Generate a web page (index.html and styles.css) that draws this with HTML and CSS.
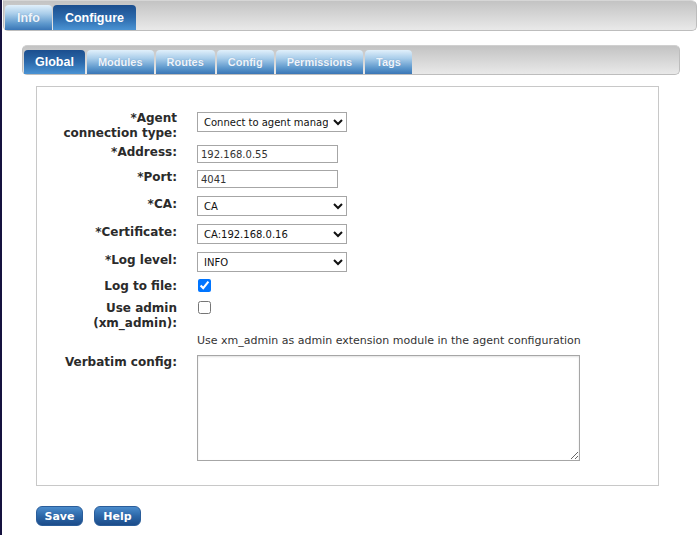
FILE: index.html
```html
<!DOCTYPE html>
<html>
<head>
<meta charset="utf-8">
<link rel="stylesheet" href="styles.css">
</head>
<body>
<div class="page">
  <div class="topbar">
    <div class="tab tab-top">Info</div>
    <div class="tab tab-top tab-sel">Configure</div>
  </div>
  <div class="subbar">
    <div class="tab tab-sub tab-sel">Global</div>
    <div class="tab tab-sub">Modules</div>
    <div class="tab tab-sub">Routes</div>
    <div class="tab tab-sub">Config</div>
    <div class="tab tab-sub">Permissions</div>
    <div class="tab tab-sub">Tags</div>
  </div>
  <div class="panel">
    <div class="form">
      <label class="lbl lbl-first">*Agent<br>connection type:</label>
      <div class="ctl"><select class="sel sel-first"><option>Connect to agent manager</option></select></div>

      <label class="lbl">*Address:</label>
      <div class="ctl"><input class="txt" type="text" value="192.168.0.55"></div>

      <label class="lbl">*Port:</label>
      <div class="ctl"><input class="txt" type="text" value="4041"></div>

      <label class="lbl lbl-sel">*CA:</label>
      <div class="ctl"><select class="sel"><option>CA</option></select></div>

      <label class="lbl lbl-sel">*Certificate:</label>
      <div class="ctl"><select class="sel"><option>CA:192.168.0.16</option></select></div>

      <label class="lbl lbl-sel">*Log level:</label>
      <div class="ctl"><select class="sel"><option>INFO</option></select></div>

      <label class="lbl">Log to file:</label>
      <div class="ctl"><input class="chk" type="checkbox" checked></div>

      <label class="lbl lbl-admin">Use admin<br>(xm_admin):</label>
      <div class="ctl"><input class="chk" type="checkbox"></div>

      <div class="lbl"></div>
      <div class="ctl help">Use xm_admin as admin extension module in the agent configuration</div>

      <label class="lbl">Verbatim config:</label>
      <div class="ctl"><textarea class="area"></textarea></div>
    </div>
  </div>
  <div class="buttons">
    <button class="btn">Save</button>
    <button class="btn">Help</button>
  </div>
</div>
</body>
</html>
```
FILE: styles.css
```css
html, body {
  margin: 0;
  padding: 0;
  background: #ffffff;
}
body {
  font-family: "DejaVu Sans", Verdana, sans-serif;
  color: #222;
}
.page {
  border-left: 2px solid #15123f;
  min-height: 535px;
  box-sizing: border-box;
  padding: 0 3px 0 1px;
}
.topbar {
  height: 31px;
  border: 1px solid #bdbdbd;
  border-top-color: #d6d6d6;
  border-radius: 0 6px 5px 5px;
  background: linear-gradient(#c3c3c3, #e9e9e9);
  display: flex;
  align-items: flex-end;
  padding-left: 1px;
  gap: 1px;
  box-sizing: border-box;
}
.tab {
  font-family: "Liberation Sans", Arial, sans-serif;
  font-weight: bold;
  color: #eef4fb;
  border-radius: 4px 4px 0 0;
  background: linear-gradient(#e1f0fb 0%, #a9cdea 35%, #5c97cc 75%, #3a76b6 100%);
  text-align: center;
  box-sizing: border-box;
  text-shadow: 0 0 1px rgba(60,100,150,0.4);
}
.tab-sel {
  color: #ffffff;
  background: linear-gradient(#1b4e8e 0%, #2b69ab 50%, #4a93d3 100%);
  text-shadow: none;
}
.tab-top {
  font-size: 12.5px;
  height: 25px;
  line-height: 26px;
  padding: 0 12px;
}
.subbar {
  margin: 14px 17px 0 19px;
  height: 30px;
  border: 1px solid #bdbdbd;
  border-top-color: #d0d0d0;
  border-radius: 5px;
  background: linear-gradient(#c3c3c3, #e9e9e9);
  display: flex;
  align-items: flex-end;
  padding-left: 1px;
  gap: 2px;
  box-sizing: border-box;
}
.tab-sub {
  font-size: 11px;
  height: 24px;
  line-height: 24px;
  padding: 0 11px;
}
.tab-sub.tab-sel {
  font-size: 12.5px;
}
.panel {
  margin: 11px 0 0 33px;
  width: 623px;
  height: 400px;
  border: 1px solid #c8c8c8;
  box-sizing: border-box;
  padding-top: 24px;
}
.form {
  display: grid;
  grid-template-columns: 140px 1fr;
  column-gap: 20px;
  row-gap: 7px;
  align-items: start;
}
.lbl {
  font-size: 12px;
  font-weight: bold;
  line-height: 15px;
  text-align: right;
  color: #2b2b2b;
}
.lbl-first {
  margin-bottom: -3px;
}
.lbl-sel {
  padding-top: 2px;
}
.lbl-admin {
  margin-bottom: -4px;
}
.ctl {
  display: flex;
}
.sel {
  font-family: "DejaVu Sans", Verdana, sans-serif;
  font-size: 10px;
  color: #111;
  width: 150px;
  height: 20px;
  margin: 1px 0 0 0;
  border: 1px solid #a6a6a6;
  border-radius: 0;
  background: #fff;
  padding: 0 2px;
}
.txt {
  font-family: "DejaVu Sans", Verdana, sans-serif;
  font-size: 10px;
  color: #333;
  width: 141px;
  height: 18px;
  box-sizing: border-box;
  border: 1px solid #a6a6a6;
  padding: 1px 3px;
  margin: 0;
}
.chk {
  margin: 0 0 0 1px;
  width: 13px;
  height: 13px;
}
.help {
  font-size: 11px;
  color: #333;
  line-height: 14px;
}
.area {
  width: 383px;
  height: 106px;
  box-sizing: border-box;
  border: 1px solid #a6a6a6;
  box-shadow: inset 0 1px 2px rgba(0,0,0,0.12);
  margin: 0;
}
.buttons {
  display: flex;
  gap: 11px;
  margin: 20px 0 0 33px;
}
.btn {
  font-family: "DejaVu Sans", Verdana, sans-serif;
  font-weight: bold;
  font-size: 11px;
  color: #fff;
  width: 47px;
  height: 20px;
  border: 1px solid #2a5d9a;
  border-radius: 6px;
  background: linear-gradient(#4b8ccc 0%, #2c67a8 50%, #1c4c8a 100%);
  padding: 0;
}
```
